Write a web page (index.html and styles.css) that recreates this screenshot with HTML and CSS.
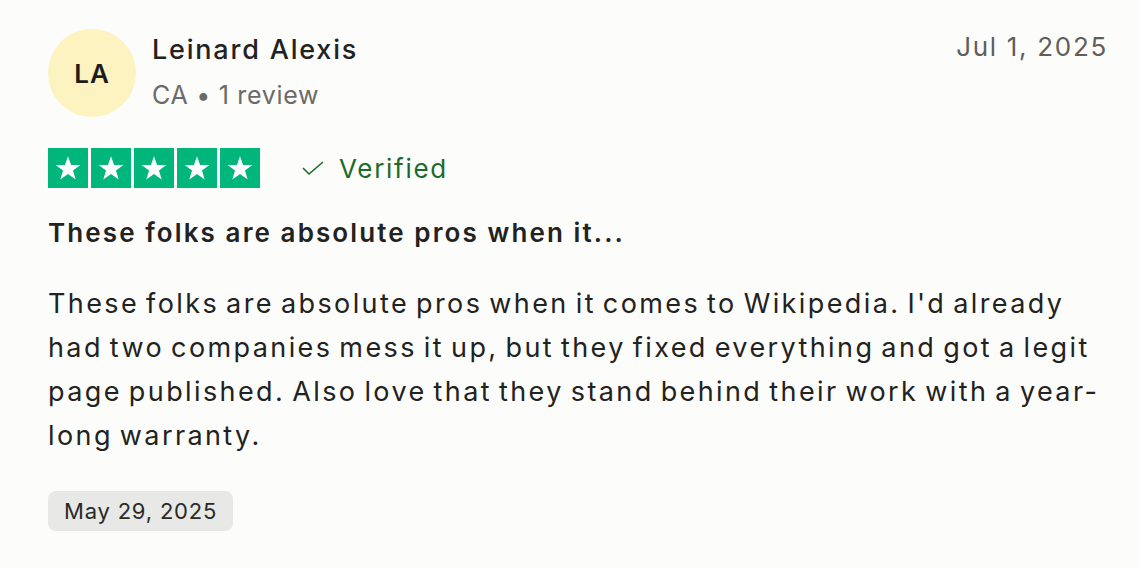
FILE: index.html
```html
<!DOCTYPE html>
<html>
<head>
  <meta charset="UTF-8">
  <title>Review</title>
  <link rel="stylesheet" href="styles.css">
</head>
<body>
<div class="review">
  <div class="header">
    <div class="avatar">LA</div>
    <div class="who">
      <div class="name">Leinard Alexis</div>
      <div class="meta">CA • 1 review</div>
    </div>
    <div class="posted">Jul 1, 2025</div>
  </div>

  <div class="rating">
    <div class="stars">
      <span class="star"><svg viewBox="0 0 24 24"><path d="M12 3.2l2.3 6.6h7l-5.6 4.1 2.1 6.7L12 16.5l-5.8 4.1 2.1-6.7-5.6-4.1h7z" fill="#fff"/></svg></span>
      <span class="star"><svg viewBox="0 0 24 24"><path d="M12 3.2l2.3 6.6h7l-5.6 4.1 2.1 6.7L12 16.5l-5.8 4.1 2.1-6.7-5.6-4.1h7z" fill="#fff"/></svg></span>
      <span class="star"><svg viewBox="0 0 24 24"><path d="M12 3.2l2.3 6.6h7l-5.6 4.1 2.1 6.7L12 16.5l-5.8 4.1 2.1-6.7-5.6-4.1h7z" fill="#fff"/></svg></span>
      <span class="star"><svg viewBox="0 0 24 24"><path d="M12 3.2l2.3 6.6h7l-5.6 4.1 2.1 6.7L12 16.5l-5.8 4.1 2.1-6.7-5.6-4.1h7z" fill="#fff"/></svg></span>
      <span class="star"><svg viewBox="0 0 24 24"><path d="M12 3.2l2.3 6.6h7l-5.6 4.1 2.1 6.7L12 16.5l-5.8 4.1 2.1-6.7-5.6-4.1h7z" fill="#fff"/></svg></span>
    </div>
    <div class="verified">
      <svg viewBox="0 0 24 16" class="check"><path d="M2 8l6 6L22 2" fill="none" stroke="#1c6b2a" stroke-width="1.6"/></svg>
      Verified
    </div>
  </div>

  <h2 class="title">These folks are absolute pros when it...</h2>
  <p class="text">These folks are absolute pros when it comes to Wikipedia. I'd already had two companies mess it up, but they fixed everything and got a legit page published. Also love that they stand behind their work with a year-long warranty.</p>

  <span class="chip">May 29, 2025</span>
</div>
</body>
</html>
```

FILE: styles.css
```css
body {
  margin: 0;
  background: #fcfcfb;
  font-family: Inter, "Noto Sans", sans-serif;
  color: #222220;
}
.review {
  width: 1064px;
  padding: 28px 0 0 48px;
}
.header {
  display: flex;
  align-items: flex-start;
}
.avatar {
  width: 88px;
  height: 88px;
  border-radius: 50%;
  background: #fdf3c1;
  display: flex;
  align-items: center;
  justify-content: center;
  font-size: 26px;
  font-weight: 600;
  letter-spacing: 1px;
  color: #1c1c1a;
  margin-top: 1px;
}
.who {
  margin-left: 16px;
  flex: 1;
}
.name {
  font-size: 27px;
  font-weight: 500;
  letter-spacing: 1.8px;
  line-height: 44px;
}
.meta {
  font-size: 25px;
  color: #6b6a66;
  letter-spacing: 0.7px;
  line-height: 46px;
}
.posted {
  font-size: 26px;
  color: #5f5e5a;
  letter-spacing: 1.7px;
  line-height: 38px;
  margin-right: 4px;
}
.rating {
  display: flex;
  align-items: center;
  margin-top: 30px;
}
.stars {
  display: flex;
  gap: 3px;
}
.star {
  width: 40px;
  height: 40px;
  background: #00b67a;
  display: flex;
  align-items: center;
  justify-content: center;
}
.star svg {
  width: 32px;
  height: 32px;
}
.verified {
  display: flex;
  align-items: center;
  margin-left: 41px;
  font-size: 26px;
  letter-spacing: 1.7px;
  color: #1c6b2a;
}
.check {
  width: 24px;
  height: 16px;
  margin-right: 14px;
}
.title {
  font-size: 26px;
  font-weight: 600;
  letter-spacing: 2.1px;
  margin: 25px 0 0;
  line-height: 40px;
}
.text {
  font-size: 27px;
  line-height: 44px;
  letter-spacing: 2.4px;
  word-spacing: -3px;
  margin: 29px 0 0;
}
.chip {
  display: inline-block;
  margin-top: 33px;
  background: #e8e8e6;
  border-radius: 8px;
  padding: 0 16px;
  font-size: 22px;
  letter-spacing: 0.8px;
  line-height: 40px;
  color: #2a2a28;
}
```
